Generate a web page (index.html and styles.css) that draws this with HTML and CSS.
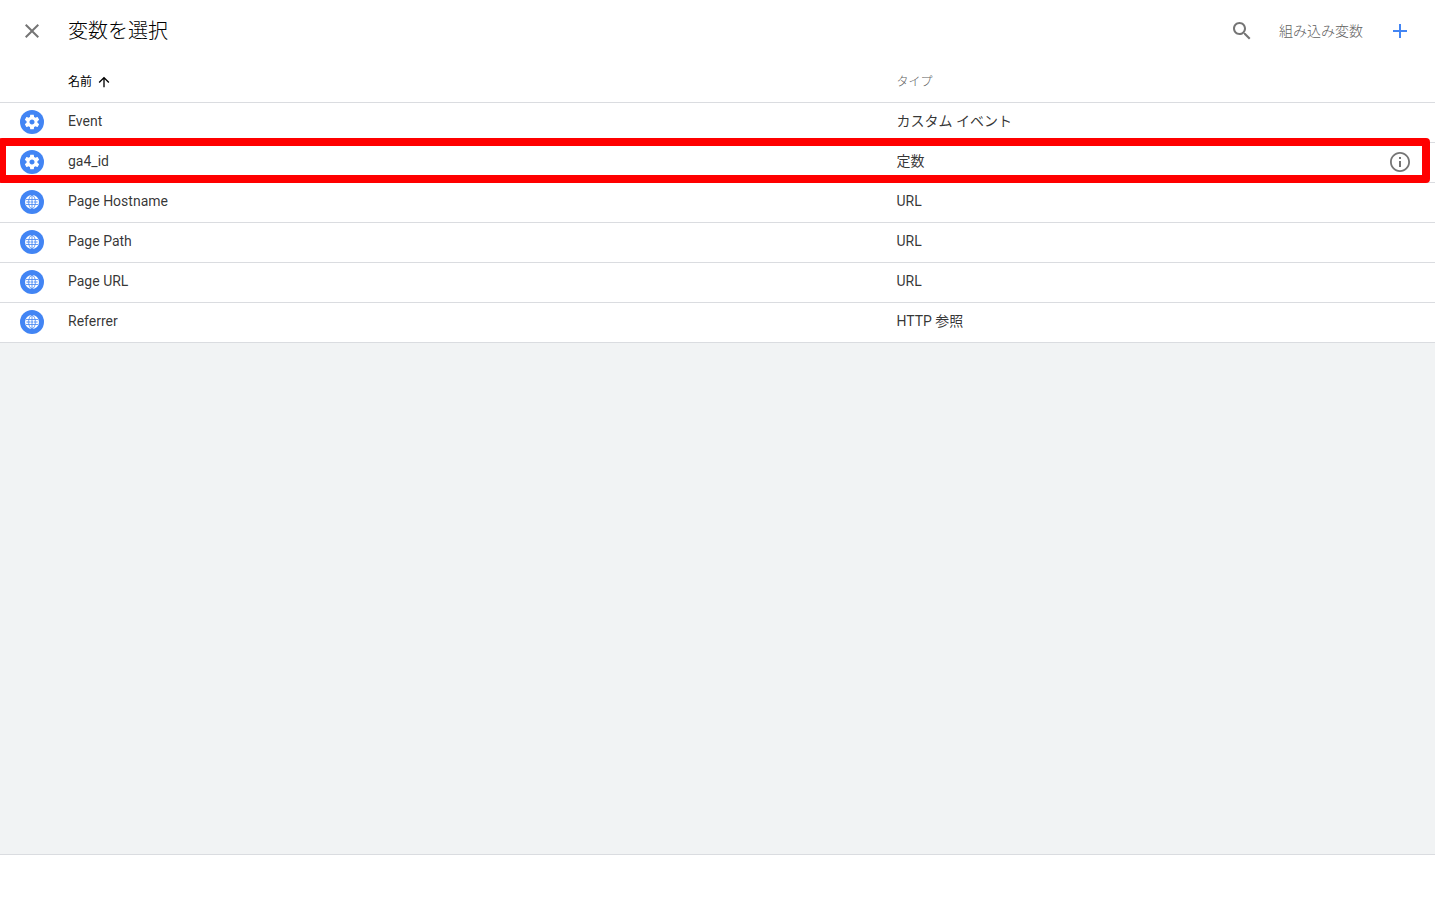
FILE: index.html
```html
<!DOCTYPE html>
<html lang="ja">

<head>
  <meta charset="utf-8">
  <title>変数を選択</title>
  <link rel="stylesheet" href="styles.css">
</head>

<body>
  <svg class="sprite" aria-hidden="true">
    <symbol id="icon-gear" viewBox="1 1 22 22">
      <path d="M19.43 12.98c.04-.32.07-.64.07-.98s-.03-.66-.07-.98l2.11-1.65c.19-.15.24-.42.12-.64l-2-3.46c-.12-.22-.39-.3-.61-.22l-2.49 1c-.52-.4-1.08-.73-1.69-.98l-.38-2.65C14.46 2.18 14.25 2 14 2h-4c-.25 0-.46.18-.49.42l-.38 2.65c-.61.25-1.17.59-1.69.98l-2.49-1c-.23-.09-.49 0-.61.22l-2 3.46c-.13.22-.07.49.12.64l2.11 1.65c-.04.32-.07.65-.07.98s.03.66.07.98l-2.11 1.65c-.19.15-.24.42-.12.64l2 3.46c.12.22.39.3.61.22l2.49-1c.52.4 1.08.73 1.69.98l.38 2.65c.03.24.24.42.49.42h4c.25 0 .46-.18.49-.42l.38-2.65c.61-.25 1.17-.59 1.69-.98l2.49 1c.23.09.49 0 .61-.22l2-3.46c.12-.22.07-.49-.12-.64l-2.11-1.65zM12 15.5c-1.93 0-3.5-1.57-3.5-3.5s1.57-3.5 3.5-3.5 3.5 1.57 3.5 3.5-1.57 3.5-3.5 3.5z" />
    </symbol>
    <symbol id="icon-globe" viewBox="0 0 16 16">
      <circle cx="8" cy="8" r="7" />
      <g fill="none" stroke="#4285f4" stroke-width=".8">
        <path d="M2 5.5h12M2 10.5h12M8 1v14" />
        <ellipse cx="8" cy="8" rx="3.4" ry="6.6" />
      </g>
      <path stroke="#4285f4" stroke-width="1.2" stroke-dasharray="1.6 .8" d="M2.5 8h11" />
    </symbol>
  </svg>

  <header class="sheet-header">
    <button class="icon-button" type="button" aria-label="閉じる">
      <svg viewBox="0 0 24 24"><path d="M19 6.41 17.59 5 12 10.59 6.41 5 5 6.41 10.59 12 5 17.59 6.41 19 12 13.41 17.59 19 19 17.59 13.41 12z" /></svg>
    </button>
    <h1 class="sheet-title">変数を選択</h1>
    <button class="icon-button" type="button" aria-label="検索">
      <svg viewBox="0 0 24 24"><path d="M15.5 14h-.79l-.28-.27C15.41 12.59 16 11.11 16 9.5 16 5.91 13.09 3 9.5 3S3 5.91 3 9.5 5.91 16 9.5 16c1.61 0 3.09-.59 4.23-1.57l.27.28v.79l5 4.99L20.49 19l-4.99-5zm-6 0C7.01 14 5 11.99 5 9.5S7.01 5 9.5 5 14 7.01 14 9.5 11.99 14 9.5 14z" /></svg>
    </button>
    <button class="text-button" type="button">組み込み変数</button>
    <button class="icon-button add" type="button" aria-label="新規">
      <svg viewBox="0 0 24 24"><path d="M19 13h-6v6h-2v-6H5v-2h6V5h2v6h6z" /></svg>
    </button>
  </header>

  <main class="sheet-body">
    <table class="variables">
      <colgroup>
        <col class="col-icon">
        <col>
        <col class="col-type">
        <col class="col-info">
      </colgroup>
      <thead>
        <tr>
          <td></td>
          <th class="sorted" scope="col" aria-sort="ascending">
            <span class="sort-label">名前
              <svg class="sort-arrow" viewBox="0 0 24 24"><path d="M4 12l1.41 1.41L11 7.83V20h2V7.83l5.58 5.59L20 12l-8-8z" /></svg>
            </span>
          </th>
          <th scope="col">タイプ</th>
          <td></td>
        </tr>
      </thead>
      <tbody>
        <tr>
          <td><span class="badge"><svg><use href="#icon-gear" /></svg></span></td>
          <td>Event</td>
          <td>カスタム イベント</td>
          <td></td>
        </tr>
        <tr class="highlighted">
          <td><span class="badge"><svg><use href="#icon-gear" /></svg></span></td>
          <td>ga4_id</td>
          <td>定数</td>
          <td>
            <button class="icon-button" type="button" aria-label="詳細">
              <svg viewBox="0 0 24 24"><path d="M11 17h2v-6h-2v6zm1-15C6.48 2 2 6.48 2 12s4.48 10 10 10 10-4.48 10-10S17.52 2 12 2zm0 18.2c-4.52 0-8.2-3.68-8.2-8.2S7.48 3.8 12 3.8s8.2 3.68 8.2 8.2-3.68 8.2-8.2 8.2zM11 9h2V7h-2v2z" /></svg>
            </button>
          </td>
        </tr>
        <tr>
          <td><span class="badge"><svg><use href="#icon-globe" /></svg></span></td>
          <td>Page Hostname</td>
          <td>URL</td>
          <td></td>
        </tr>
        <tr>
          <td><span class="badge"><svg><use href="#icon-globe" /></svg></span></td>
          <td>Page Path</td>
          <td>URL</td>
          <td></td>
        </tr>
        <tr>
          <td><span class="badge"><svg><use href="#icon-globe" /></svg></span></td>
          <td>Page URL</td>
          <td>URL</td>
          <td></td>
        </tr>
        <tr>
          <td><span class="badge"><svg><use href="#icon-globe" /></svg></span></td>
          <td>Referrer</td>
          <td>HTTP 参照</td>
          <td></td>
        </tr>
      </tbody>
    </table>
  </main>

  <footer class="sheet-footer"></footer>
</body>

</html>
```
FILE: styles.css
```css
* {
  box-sizing: border-box;
}

body {
  display: flex;
  flex-direction: column;
  min-height: 100vh;
  margin: 0;
  overflow-x: hidden;
  background: #fff;
  color: rgba(0, 0, 0, 0.8);
  font-family: Roboto, "Noto Sans CJK JP", sans-serif;
  font-size: 14px;
  line-height: 20px;
}

.sprite {
  display: none;
}

svg {
  display: block;
  fill: currentColor;
}

button {
  padding: 0;
  border: none;
  background: none;
  color: #757575;
  font: inherit;
  cursor: pointer;
}

.icon-button,
.icon-button svg {
  width: 24px;
  height: 24px;
}

.icon-button.add {
  color: #4285f4;
}

.text-button {
  margin: 0 25px;
  color: #616161;
  font-weight: 300;
}

.sheet-header {
  display: flex;
  align-items: center;
  height: 62px;
  padding: 0 23px 0 20px;
}

.sheet-title {
  flex: 1;
  margin: 0 0 0 24px;
  color: #000;
  font-size: 20px;
  font-weight: 300;
  line-height: 24px;
}

.sheet-body {
  flex: 1;
  background: #f1f3f4;
}

.variables {
  width: 100%;
  table-layout: fixed;
  border-collapse: separate;
  border-spacing: 0;
  background: #fff;
}

.col-icon {
  width: 68px;
}

.col-type {
  width: 33%;
}

.col-info {
  width: 65px;
}

.variables th,
.variables td {
  height: 40px;
  padding: 0 0 4px;
  border-bottom: 1px solid #dadce0;
  text-align: left;
  vertical-align: middle;
}

.variables thead th,
.variables thead td {
  height: 41px;
  padding: 0;
}

.variables th {
  color: #616161;
  font-size: 12px;
  font-weight: 300;
}

.variables .sorted {
  color: #000;
  font-weight: 400;
}

.variables td:first-child {
  padding: 0 0 2px 20px;
}

.variables td:last-child {
  padding: 0 0 2px 18px;
}

.sort-label {
  display: flex;
  align-items: center;
  gap: 4px;
}

.sort-arrow {
  width: 16px;
  height: 16px;
}

.badge {
  display: flex;
  align-items: center;
  justify-content: center;
  width: 24px;
  height: 24px;
  border-radius: 50%;
  background: #4285f4;
  color: #fff;
}

.badge svg {
  width: 16px;
  height: 16px;
}

.highlighted {
  position: relative;
}

.highlighted .icon-button {
  display: block;
}

/* red marker around the row */
.highlighted td:first-child::after {
  content: "";
  position: absolute;
  top: -5px;
  right: 5px;
  bottom: 0;
  left: -2px;
  border: 8px solid #f00;
  border-radius: 4px;
  pointer-events: none;
}

.sheet-footer {
  height: 51px;
  border-top: 1px solid #dadce0;
}
```
